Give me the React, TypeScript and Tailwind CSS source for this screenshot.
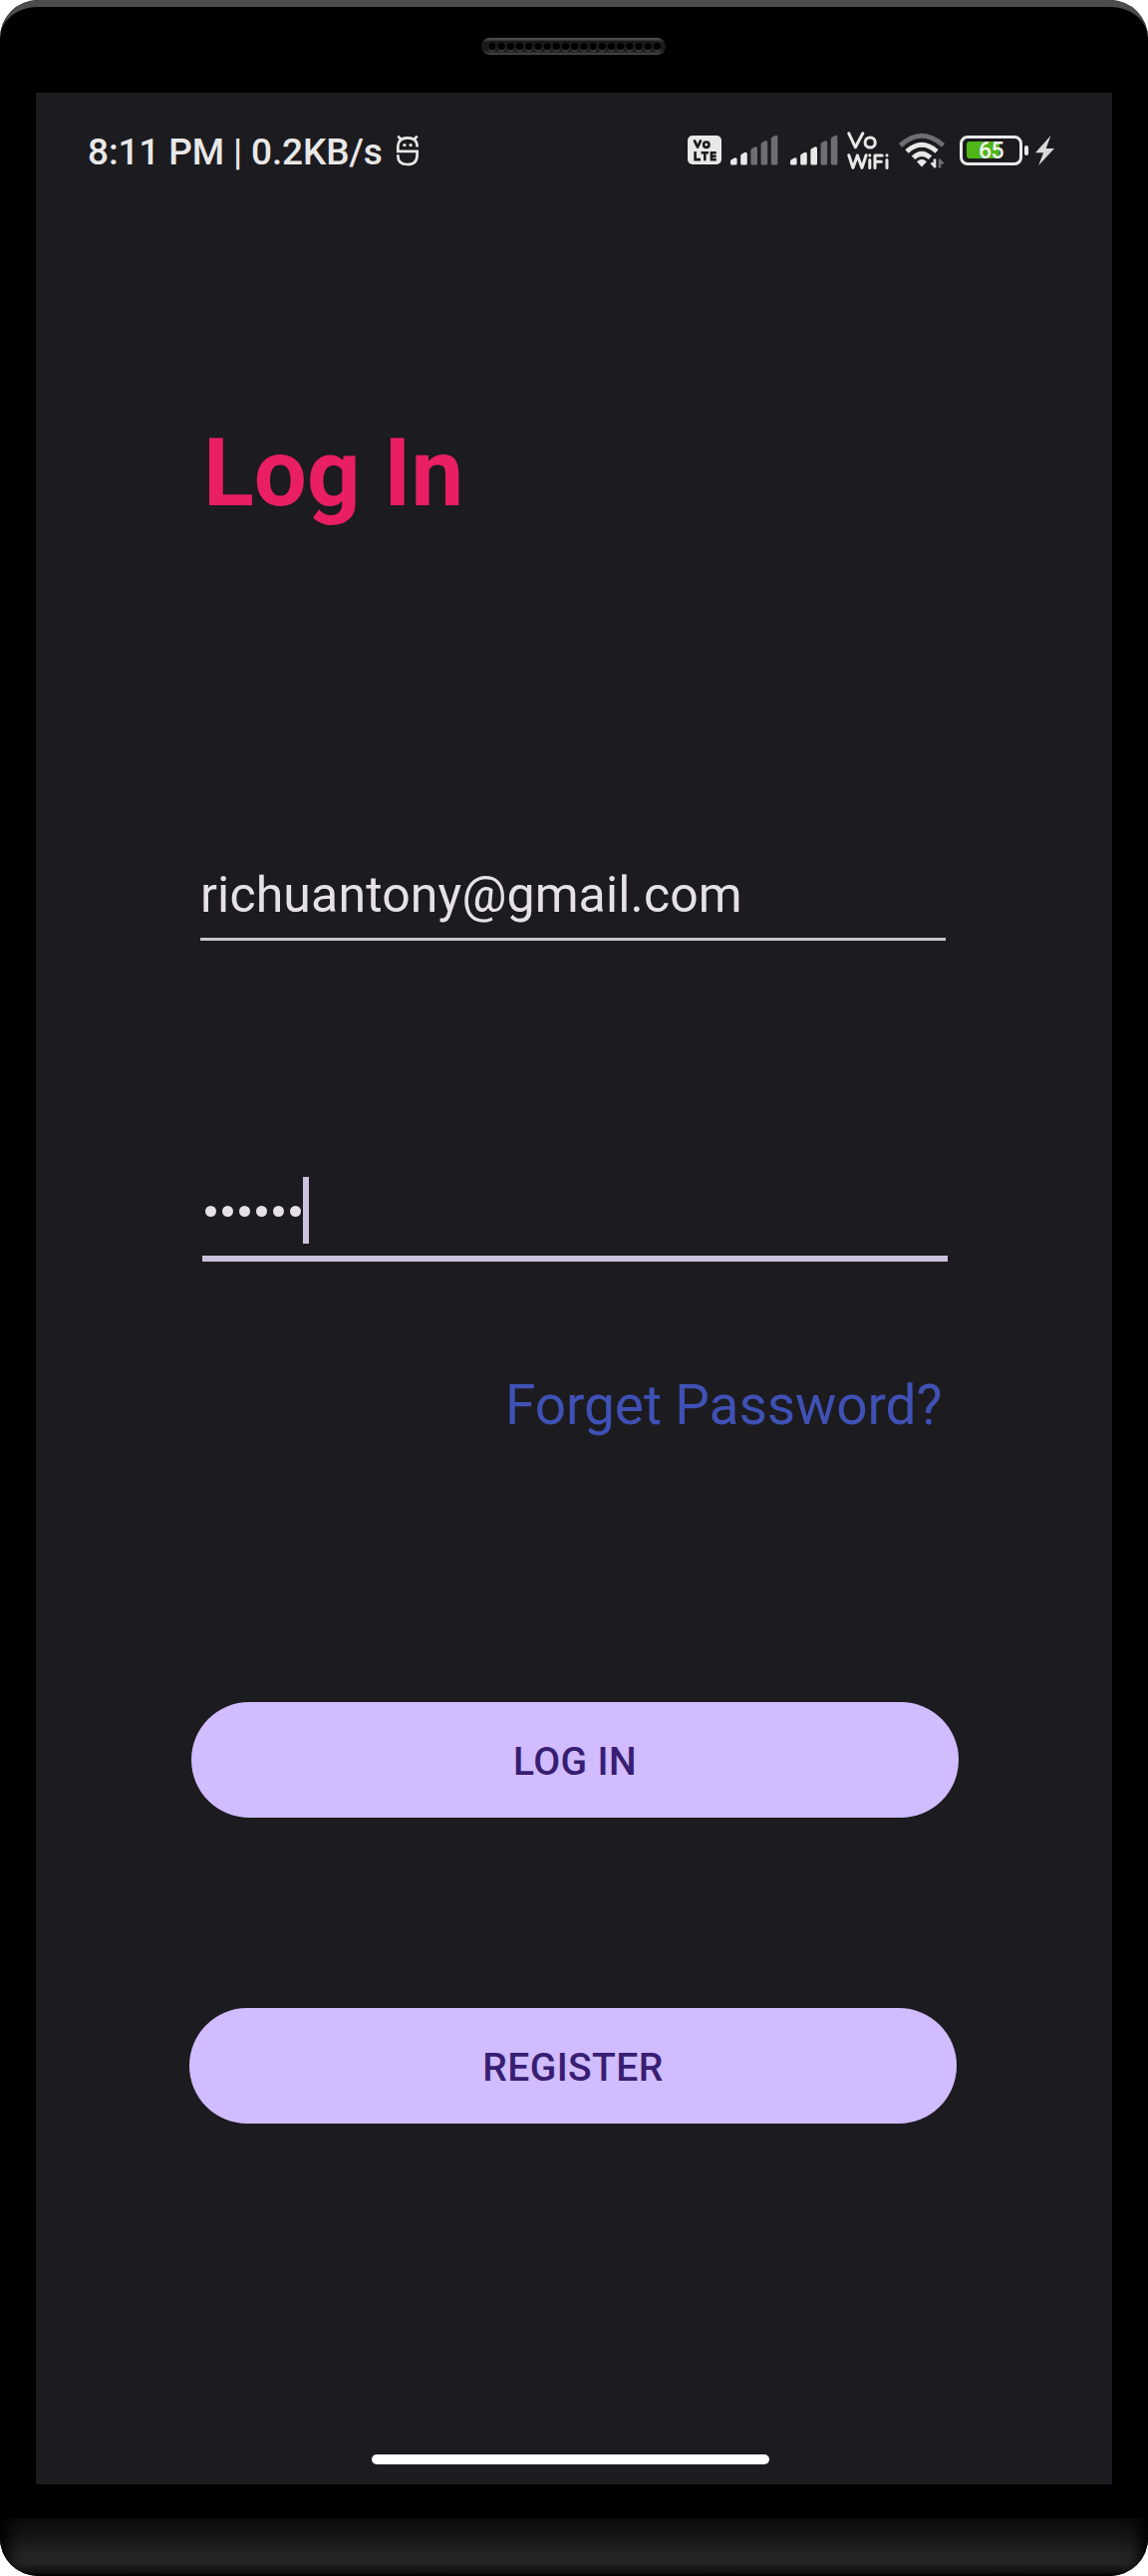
function Speaker() {
  return (
    <svg width="185" height="17" viewBox="0 0 185 17">
      <defs>
        <linearGradient id="rim" x1="0" y1="0" x2="0" y2="1">
          <stop offset="0" stopColor="#5a5a5a" />
          <stop offset="0.25" stopColor="#1c1c1c" />
          <stop offset="0.75" stopColor="#1c1c1c" />
          <stop offset="1" stopColor="#4a4a4a" />
        </linearGradient>
      </defs>
      <rect width="185" height="17" rx="8.5" fill="url(#rim)" />
      <rect x="3" y="3" width="179" height="11" rx="5.5" fill="#1b1b1b" />
      {Array.from({ length: 19 }, (_, i) => (
        <g key={i}>
          <circle cx={11 + i * 9.19} cy="9.8" r="3.6" fill="#5c5c5c" />
          <circle cx={11 + i * 9.19} cy="8.8" r="3.7" fill="#000" />
        </g>
      ))}
    </svg>
  );
}

function Signal({ active }: { active: number }) {
  const tops = [23, 17.5, 12, 6, 0.5];
  return (
    <svg width="48" height="31" viewBox="0 0 48 31">
      {tops.map((t, i) => {
        const x = i * 10.2;
        return (
          <path
            key={i}
            d={`M${x} 29V${t + 4}Q${x} ${t + 2.6} ${x + 1.3} ${t + 2}L${x + 4} ${t + 0.4}Q${x + 6.6} ${t - 0.4} ${x + 6.6} ${t + 2}V29Q${x + 6.6} 30.5 ${x + 5.2} 30.5H${x + 1.4}Q${x} 30.5 ${x} 29Z`}
            fill={i < active ? "#e8e8e8" : "#6f6f72"}
          />
        );
      })}
    </svg>
  );
}

function StatusIcons() {
  return (
    <div className="flex items-center">
      <svg width="34" height="29" viewBox="0 0 34 29" fill="none" stroke="#1c1b1f" strokeWidth="2.6">
        <rect width="34" height="29" rx="5" fill="#e8e8e8" stroke="none" />
        <path d="M7 5.4l3 6.2 3-6.2" strokeLinecap="round" strokeLinejoin="round" />
        <circle cx="18.8" cy="9.2" r="2.7" />
        <path d="M7.6 16v8.1h5.4M13.6 17.3h7.4M17.3 17v8.3M28.8 17.3h-4.9v6.8h4.9M24 20.7h4.6" />
      </svg>
      <div className="ml-[9px] flex"><Signal active={2} /></div>
      <div className="ml-[12px] flex"><Signal active={3} /></div>
      <svg className="ml-[9px]" width="42" height="40" viewBox="0 0 42 40" fill="none" stroke="#e8e8e8" strokeWidth="3" strokeLinecap="round" strokeLinejoin="round">
        <path d="M1.8 2.8l6.6 14 7.4-14" />
        <circle cx="23.2" cy="12" r="5.1" />
        <path d="M1.8 24.8l4.1 12.6 4.5-12.4 4.6 12.4 4.1-12.6M22.8 29.5v8.1M28 37.6V25h7.2M28 31.2h6.4M40 29.5v8.1" />
        <path d="M22.8 24.7v.2M40 24.7v.2" />
      </svg>
      <svg className="ml-[10px]" width="48" height="36" viewBox="0 0 48 36" fill="none" strokeWidth="5">
        <path d="M1.5 13Q23 -6.5 44.5 13" stroke="#6f6f72" />
        <path d="M8 19Q23 5.5 38 19" stroke="#e8e8e8" />
        <path d="M14.5 25.3Q23 17.3 31.5 25.3" stroke="#e8e8e8" />
        <path d="M18 29.3q5-5 10 0L23 34.4z" fill="#e8e8e8" />
        <path d="M36 26.5v8.7M36.8 34.8l-4.2-4.5" stroke="#e8e8e8" strokeWidth="2.6" />
        <path d="M41 35.5v-8.8M40.4 27l4 4.5" stroke="#6f6f72" strokeWidth="2.6" />
      </svg>
      <div className="ml-[13px] flex items-center">
        <div className="relative h-[30px] w-[63px] rounded-[8px] border-[3px] border-[#e8e8e8] p-[3.5px]">
          <div className="h-full w-[33px] rounded-[3px] bg-[#50b618]" />
          <span className="absolute inset-0 flex items-center justify-center pt-[2px] text-[23px] leading-none font-medium tracking-[-0.5px] text-[#f2f2f2]">65</span>
        </div>
        <div className="ml-[2px] h-[10px] w-[4px] rounded-[2px] bg-[#e8e8e8]" />
      </div>
      <svg className="ml-[7px]" width="19" height="30" viewBox="0 0 19 30">
        <path d="M15.5 0L0 17.3h8L3.2 30 19 13H10.7z" fill="#d8d8d8" />
      </svg>
    </div>
  );
}

const fieldText = "text-[#e6e1e5]";
const pill =
  "block h-[116px] w-[770px] rounded-full bg-[#d0bcff] pt-[4px] text-center text-[39px] leading-none font-medium tracking-[0.4px] text-[#381e72]";

export default function App() {
  return (
    <div className="h-[2585px] w-[1152px] bg-white font-[Roboto,sans-serif]">
      <div className="relative flex h-full w-full flex-col overflow-hidden rounded-[38px] bg-black">
        <div className="pointer-events-none absolute inset-0 rounded-[38px] border-t-[7px] border-t-[#4c4c4c]" />
        <div className="flex h-[93px] shrink-0 justify-center pt-[38px] pr-px">
          <Speaker />
        </div>
        <div className="mx-[36px] flex h-[2400px] shrink-0 flex-col bg-[#1c1b1f]">
          <header className="flex h-[115px] items-center justify-between pr-[58px] pl-[52px]">
            <div className="flex items-center">
              <span className="pt-[3px] text-[37px] leading-none font-medium tracking-[-0.15px] whitespace-nowrap text-[#e8e8e8]">8:11 PM | 0.2KB/s</span>
              <svg className="ml-[13px]" width="24" height="32" viewBox="0 0 24 32" fill="none" stroke="#e8e8e8" strokeWidth="2.7">
                <path d="M21.6 12.5V11Q21 3.4 12 3.4T2.3 11.6V16.8H21.6V20.5Q21.6 30 12 30T2.3 21.5V20.3" />
                <path d="M2.4 1.5l2.8 3.4M21.6 1.5l-2.8 3.4" />
                <circle cx="8.9" cy="10.6" r="1.7" fill="#e8e8e8" stroke="none" />
                <circle cx="15.1" cy="10.6" r="1.7" fill="#e8e8e8" stroke="none" />
              </svg>
            </div>
            <StatusIcons />
          </header>
          <main className="flex flex-col items-start">
            <h1 className="mt-[217px] ml-[168px] text-[94px] leading-[100px] font-bold text-[#e91e63]">Log In</h1>
            <div className="mt-[340px] ml-[165px] h-[79px] w-[748px] border-b-[3px] border-[#c9c5d0]">
              <span className={`block text-[50px] leading-[66px] tracking-[0.14px] ${fieldText}`}>richuantony@gmail.com</span>
            </div>
            <div className="mt-[237px] ml-[167px] flex h-[85px] w-[748px] items-start border-b-[6px] border-[#ccc2dc]">
              <div className="mt-[29px] ml-[3px] flex gap-[6px]">
                {Array.from({ length: 6 }, (_, i) => (
                  <span key={i} className="size-[11px] rounded-full bg-[#e6e1e5]" />
                ))}
              </div>
              <div className="ml-[2px] h-[67px] w-[6px] bg-[#ccc2dc]" />
            </div>
            <a className="mt-[112px] ml-[471px] text-[55px] leading-[64px] tracking-[-0.1px] whitespace-nowrap text-[#3f51b5]">Forget Password?</a>
            <button className={`mt-[266px] ml-[156px] ${pill}`}>LOG IN</button>
            <button className={`mt-[191px] ml-[154px] ${pill}`}>REGISTER</button>
          </main>
          <div className="mt-auto mb-[20px] ml-[337px] h-[10px] w-[399px] rounded-full bg-white" />
        </div>
        <div className="mt-[34px] h-[58px] bg-[linear-gradient(to_bottom,#0c0c0c,#161616_35%,#252525_65%,#232323_78%,#101010_94%,#000)] shadow-[inset_18px_0_16px_-10px_#000,inset_-18px_0_16px_-10px_#000]" />
      </div>
    </div>
  );
}
